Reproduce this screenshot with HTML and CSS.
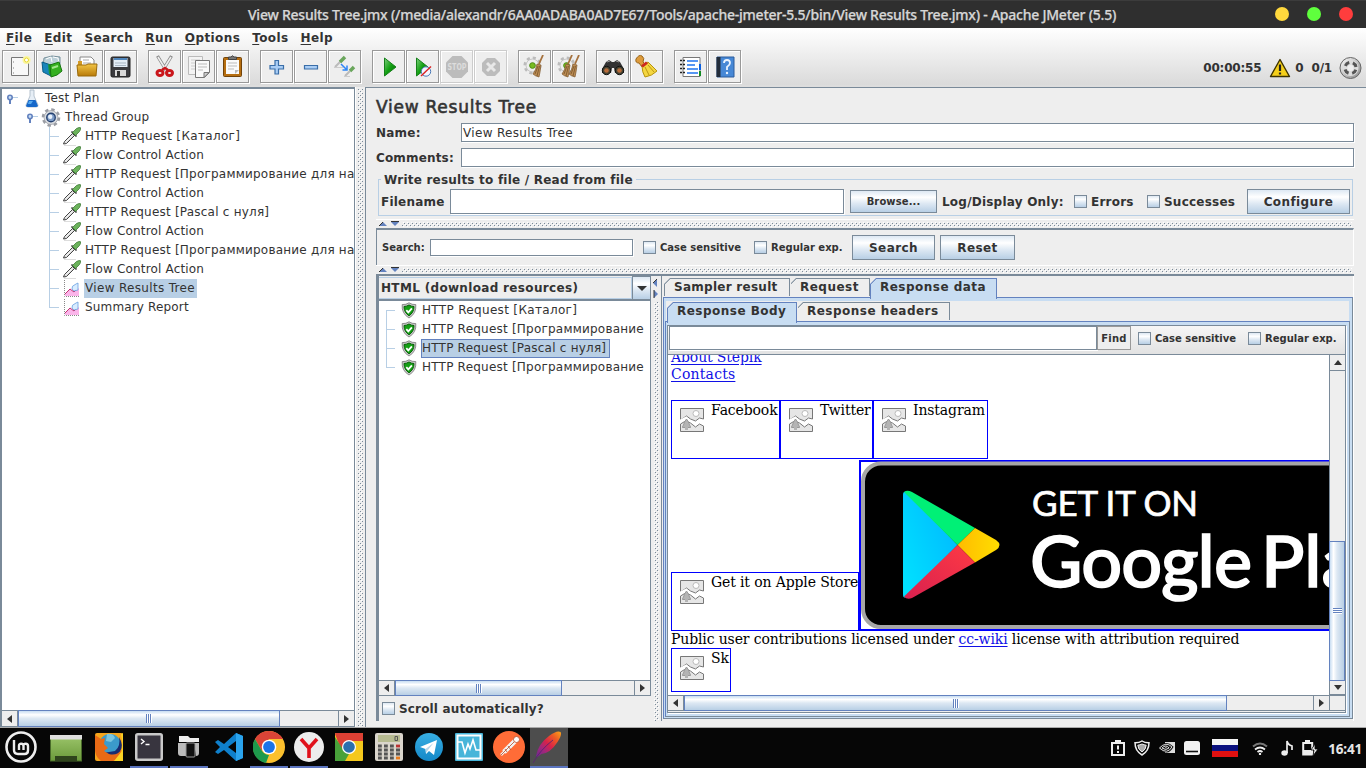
FILE: index.html
```html
<!DOCTYPE html>
<html lang="en">
<head>
<meta charset="utf-8">
<title>Apache JMeter</title>
<link rel="stylesheet" href="styles.css">
</head>
<body>
<svg class="defs" width="0" height="0">
  <defs>
    <pattern id="bump" width="4" height="4" patternUnits="userSpaceOnUse"><path fill="#7a8a99" d="M0 0h1v1H0zM2 2h1v1H2z"/><path fill="#fff" d="M1 1h1v1H1zM3 3h1v1H3z"/></pattern>
    <linearGradient id="gGreen" x2="1" y2="1"><stop stop-color="#7fd07f"/><stop offset=".5" stop-color="#12a012"/><stop offset="1" stop-color="#046204"/></linearGradient>
    <linearGradient id="gGold" x2="0" y2="1"><stop stop-color="#f3c545"/><stop offset="1" stop-color="#b87a08"/></linearGradient>
    <linearGradient id="gMetal" x2="1" y2="1"><stop stop-color="#fff"/><stop offset="1" stop-color="#888"/></linearGradient>
    <linearGradient id="gBlue" x2="0" y2="1"><stop stop-color="#37aee2"/><stop offset="1" stop-color="#1488c8"/></linearGradient>
    <linearGradient id="gFeather" x1="0" y1="1" x2="1" y2="0"><stop stop-color="#6a2b8f"/><stop offset=".3" stop-color="#a5267a"/><stop offset=".5" stop-color="#d6224a"/><stop offset=".75" stop-color="#ee5a24"/><stop offset="1" stop-color="#f9a51a"/></linearGradient>
    <linearGradient id="gDesk" x2="0" y2="1"><stop stop-color="#9bc46a"/><stop offset="1" stop-color="#6b9a3a"/></linearGradient>
    <linearGradient id="pBlue" x1="1" y1="0" x2="0" y2=".8"><stop stop-color="#00b4ff"/><stop offset="1" stop-color="#00e0ff"/></linearGradient>
    <linearGradient id="pRed" x1="1" y1="0" x2="0" y2="1"><stop stop-color="#ff3a44"/><stop offset="1" stop-color="#d8204f"/></linearGradient>
    <linearGradient id="pYel" x2="1"><stop stop-color="#ffbb00"/><stop offset="1" stop-color="#ffde00"/></linearGradient>
    <symbol id="dropper" viewBox="0 0 19 19"><path d="M2 18.500h12" stroke="#ddd"/><path d="M1.500 17l1-2.500 8-8 2 2-8 8z" fill="#ddd" stroke="#444" stroke-width="1"/><path d="M4 14.500l6-6" stroke="#fff"/><path d="M9.500 4.500l5 5" stroke="#333" stroke-width="1.600"/><path d="M10.500 5.500l4-4q3-1.500 4-.8.5 1.500-1 3.800l-4 4z" fill="#6cb35c" stroke="#3d7a35" stroke-width=".8"/></symbol>
    <symbol id="chart" viewBox="0 0 19 19"><path d="M2.500 1v16.500H18" stroke="#888" stroke-dasharray="1 1" fill="none"/><path d="M3 15l5-5 4 3 5-4v8H3z" fill="#fbb5ea"/><path d="M3 15l5-5 4 3 4-4" fill="none" stroke="#c03070"/><path d="M10 10q-1-3 4-5l2-1v7l-4 1z" fill="#d8ecff" stroke="#6a9fe0" stroke-width=".8"/></symbol>
    <symbol id="flask" viewBox="0 0 16 19"><path d="M6 1h4v6l4 9q.5 2-2 2H4q-2.500 0-2-2l4-9z" fill="#e6eef6" stroke="#a5b4c3" stroke-width=".8"/><path d="M4.500 11h7l2.300 5.500q0 1.500-2 1.500H4q-2 0-1.800-1.500z" fill="#1567c9"/><path d="M5 12h4l-2 3H4z" fill="#55a9ef"/></symbol>
    <symbol id="gear" viewBox="0 0 20 20"><circle cx="10" cy="10" r="8" fill="none" stroke="#9a9da4" stroke-width="3.600" stroke-dasharray="3.400 2.880"/><circle cx="10" cy="10" r="7.300" fill="#d9dce0" stroke="#9a9da4" stroke-width=".8"/><circle cx="10" cy="10" r="4.500" fill="#7d9bc6" stroke="#24406f" stroke-width="1.400"/><circle cx="9.200" cy="9.200" r="2.300" fill="#e9f1fb"/></symbol>
    <symbol id="handle" viewBox="0 0 12 12"><path d="M4 4.500h8" stroke="#b8cfe5"/><path d="M4 5v6" stroke="#6382bf" stroke-width="2"/><circle cx="4" cy="4.500" r="2.200" fill="#c8ddf2" stroke="#6382bf" stroke-width="1.600"/></symbol>
    <symbol id="shield" viewBox="0 0 16 17"><path d="M8 .8q3 2 6.800 1.800.8 9-6.800 13.400Q.4 11.600 1.200 2.600 5 2.800 8 .8z" fill="#c9c9c9" stroke="#777" stroke-width=".8"/><path d="M8 3q2.500 1.500 5 1.500 0 6-5 9.300-5-3.300-5-9.300Q5.500 4.500 8 3z" fill="#14a014" stroke="#066006"/><path d="M5.300 8.200l2 2.200 3.600-4" fill="none" stroke="#fff" stroke-width="1.800"/></symbol>
    <symbol id="broken" viewBox="0 0 26 27"><path d="M1.500 11V2.500h23V13l-4-1-4 3-5-2-4-3-6 4z" fill="#e6e6e6" stroke="#777"/><path d="M1.500 25.500V18l5-3 5 2 5 4 4-3 4 2v5.500z" fill="#e6e6e6" stroke="#777"/><path d="M1 14.500l6-3 5 4 5 3 4-3 4 1" stroke="#fff" stroke-width="1.500" fill="none"/><circle cx="17" cy="7.500" r="3" fill="#fff" stroke="#bbb"/><path d="M7.500 13q2.500 3 3 6 1 1 1 2.500H3.500q0-1.500 1-2.500.5-3 3-6z" fill="#b4b4b4" stroke="#999"/><path d="M6 21h3v3H6z" fill="#b4b4b4"/></symbol>
    <symbol id="broom" viewBox="0 0 12 23"><path d="M11 0L7 9" stroke="#a5713d" stroke-width="1.800"/><path d="M5 9l4 1q-1 8-2 12-4-1-6-3 3-4 4-10z" fill="#bd8d54" stroke="#7b5529" stroke-width=".7"/><path d="M6 11L3 19M7.500 11L5 21" stroke="#6c4a24" stroke-width=".7"/></symbol>
    <symbol id="cog" viewBox="0 0 20 20"><circle cx="10" cy="10" r="7.500" fill="none" stroke="#bbb" stroke-width="4" stroke-dasharray="3 2.890"/><circle cx="10" cy="10" r="6.800" fill="#eee" stroke="#c4c4c4"/><circle cx="10" cy="10" r="3" fill="#78bb22" stroke="#4a8a12"/></symbol>
  </defs>
</svg>

<header class="titlebar">
  <h1>View Results Tree.jmx (/media/alexandr/6AA0ADABA0AD7E67/Tools/apache-jmeter-5.5/bin/View Results Tree.jmx) - Apache JMeter (5.5)</h1>
  <div class="winbtns"><i class="wy"></i><i class="wg"></i><i class="wr"></i></div>
</header>

<div class="chrome">
  <nav class="menubar"><span><u>F</u>ile</span><span><u>E</u>dit</span><span><u>S</u>earch</span><span><u>R</u>un</span><span><u>O</u>ptions</span><span><u>T</u>ools</span><span><u>H</u>elp</span></nav>
  <div class="toolbar">
    <div class="tgroup">
      <button><svg viewBox="0 0 33 33"><path d="M9.500 7.500h17v18h-17z" fill="#f8f8f8" stroke="#777"/><path d="M11.500 11v2M11.500 17v2M11.500 22v2" stroke="#bbb"/><circle cx="24.500" cy="10" r="4" fill="#fbf6a0"/><circle cx="24.500" cy="10" r="2" fill="#fff" stroke="#e7d82e"/></svg></button>
      <button><svg viewBox="0 0 33 33"><path d="M8 8l8-2 8 1v9H7z" fill="#bcd0d8" stroke="#77909b"/><path d="M10 9l5-2 1 5M17 7l5 1 1 6" stroke="#fff" fill="none"/><path d="M6 12l9 3v11l-8-4z" fill="#1785ba" stroke="#0a5d88"/><path d="M12 14l7 2v10l-6-2z" fill="#199a35"/><path d="M14 15l9-3 3 9-5 4-6 2z" fill="#35b020" stroke="#19780e"/><path d="M16 18l6-2" stroke="#a3e88d" stroke-width="2"/></svg></button>
      <button><svg viewBox="0 0 33 33"><path d="M10 7h11l3 3v8H10z" fill="#fff" stroke="#888"/><path d="M13 10h6M13 13h8" stroke="#aaa"/><path d="M8 11h4v5H8z" fill="#d39a24"/><path d="M7 15h9l2-1h9l-1 12H8z" fill="url(#gGold)" stroke="#9a6a0b"/></svg></button>
      <button><svg viewBox="0 0 33 33"><rect x="7" y="7" width="19" height="20" rx="1.500" fill="#3b3b3f" stroke="#222"/><path d="M9.500 8h14v9h-14z" fill="#e4edf6"/><path d="M10 8h13v2H10z" fill="#5187bd"/><path d="M11 13h11M11 15.500h11" stroke="#a9b6c3"/><path d="M11 20h11v6H11z" fill="#d9d9d9"/><path d="M13 21h3v5h-3z" fill="#333"/></svg></button>
    </div>
    <div class="tgroup">
      <button><svg viewBox="0 0 33 33"><path d="M9.500 6l8.500 14M23.500 6L15 20" stroke="#888" stroke-width="3.200"/><path d="M10 7l8 13M23 7l-8 13" stroke="#eee" stroke-width="1.600"/><g fill="none" stroke="#c9161b" stroke-width="3"><ellipse cx="12" cy="23" rx="3" ry="2.500"/><ellipse cx="21.500" cy="23" rx="3" ry="2.500"/></g><path d="M14 20l3-2 3 2" stroke="#c9161b" stroke-width="2.500" fill="none"/></svg></button>
      <button><svg viewBox="0 0 33 33"><path d="M6.500 6.500h14v18h-14z" fill="#f4f4f4" stroke="#bbb"/><path d="M9 10h9M9 13h9M9 16h5M9 19h5" stroke="#ccc"/><path d="M13.500 10.500h14v12l-5 5h-9z" fill="#fafafa" stroke="#777"/><path d="M16 14h9M16 17h9M16 20h5" stroke="#bbb"/><path d="M27 22.500l-5 5v-5z" fill="#ccc" stroke="#777"/></svg></button>
      <button><svg viewBox="0 0 33 33"><rect x="7.500" y="7.500" width="18" height="19" rx="1" fill="#b66e10" stroke="#71430a"/><path d="M10 10h13v14H10z" fill="#fafafa"/><path d="M12 13h9M12 16h9M12 19h6" stroke="#bbb"/><path d="M12.500 9.500V7h2.500q1.500-2.500 3 0h2.500v2.500z" fill="#777" stroke="#444"/><path d="M23 20l-4 4v-4z" fill="#bbb"/></svg></button>
    </div>
    <div class="tgroup">
      <button><svg viewBox="0 0 33 33"><path d="M15 10.500h3.500v5h5v3.500h-5v5H15v-5h-5v-3.500h5z" fill="#a9cdf5" stroke="#3a6ea8" stroke-width="1.200"/></svg></button>
      <button><svg viewBox="0 0 33 33"><path d="M10.500 15.500h13v3.500h-13z" fill="#a9cdf5" stroke="#3a6ea8" stroke-width="1.200"/></svg></button>
      <button><svg viewBox="0 0 33 33"><path d="M7 17l6-6M17 26l5-5" stroke="#bbb" stroke-width="2"/><path d="M12 12l5-5M22 21l4-4" stroke="#6aa65c" stroke-width="3.500"/><path d="M6 17.500h9M16 26.500h6" stroke="#ccc"/><path d="M13 14l6 6m0-4.500V20h-4.500" stroke="#2f86f6" stroke-width="1.500" fill="none"/></svg></button>
    </div>
    <div class="tgroup">
      <button><svg viewBox="0 0 33 33"><path d="M12.500 8l11.500 9-11.500 9z" fill="url(#gGreen)" stroke="#16801a"/></svg></button>
      <button><svg viewBox="0 0 33 33"><path d="M10.500 8L22 17l-11.500 9z" fill="url(#gGreen)" stroke="#16801a"/><circle cx="20" cy="21.500" r="4.700" fill="#f4f6ff" stroke="#4a78b5"/><path d="M15 26L25 16.500" stroke="#d92020" stroke-width="1.400"/></svg></button>
      <button class="off"><svg viewBox="0 0 33 33"><path d="M12.500 6h9l6.500 6.500v9L21.500 28h-9L6 21.500v-9z" fill="#bcbcbc"/><text x="17" y="20" class="stop" textLength="19" lengthAdjust="spacingAndGlyphs">STOP</text></svg></button>
      <button class="off"><svg viewBox="0 0 33 33"><path d="M13 8h8l5 5v8l-5 5h-8l-5-5v-8z" fill="#bcbcbc"/><path d="M13 13l8 8M21 13l-8 8" stroke="#e8e8e8" stroke-width="3"/></svg></button>
    </div>
    <div class="tgroup">
      <button><svg viewBox="0 0 33 33"><use href="#cog" x="5" y="6" width="19" height="19"/><use href="#broom" x="14" y="5" width="12" height="23"/></svg></button>
      <button><svg viewBox="0 0 33 33"><use href="#cog" x="5" y="6" width="19" height="19"/><use href="#broom" x="9" y="5" width="12" height="23"/><use href="#broom" x="16" y="5" width="12" height="23"/></svg></button>
    </div>
    <div class="tgroup">
      <button><svg viewBox="0 0 33 33"><path d="M10 12l3-2 3 2h2l3-2 3 2 4 7v4h-9l-1-5h-2l-1 5H6v-4z" fill="#333"/><circle cx="10.500" cy="20.500" r="4.200" fill="#443" stroke="#111"/><circle cx="23.500" cy="20.500" r="4.200" fill="#443" stroke="#111"/><circle cx="10.500" cy="20.500" r="2.300" fill="#b86b3a"/><circle cx="23.500" cy="20.500" r="2.300" fill="#b86b3a"/><path d="M11 12l3-1M20 11l3 1" stroke="#999"/></svg></button>
      <button><svg viewBox="0 0 33 33"><path d="M6 9q3-5 6-3 3 2 1 6l2 2-3 3-3-4q-4 0-3-4z" fill="#dd9b3c" stroke="#9a6518"/><path d="M12 16l6-4 9 9q-5 5-12 6-3-5-3-11z" fill="#f4d640" stroke="#b6930f"/><path d="M11 15.500l5-4 2 2-5 4z" fill="#cc2a20"/><path d="M15 17l4 8M18 15l6 7" stroke="#bb9715"/></svg></button>
    </div>
    <div class="tgroup">
      <button><svg viewBox="0 0 33 33"><path d="M9 7.500h17v19H9z" fill="#fff" stroke="#777"/><path d="M6 10.500h5M6 14.500h5M6 18.500h5M6 22.500h5" stroke="#222" stroke-width="1.600" stroke-dasharray="2 1"/><path d="M13 11h11M13 15h8M13 19h11M13 23h11" stroke="#2074f0" stroke-width="1.600"/><path d="M26 14v6" stroke="#0a60e0" stroke-width="2"/><path d="M26 21v5" stroke="#118a22" stroke-width="2"/></svg></button>
      <button><svg viewBox="0 0 33 33"><path d="M9 7h17v20H9z" fill="#4788d6" stroke="#2c5c9c"/><path d="M8.500 7h4v20h-4z" fill="#222c3a"/><path d="M16 13q0-3 3-3t3 3q0 2-3 4v3" fill="none" stroke="#eaf3ff" stroke-width="1.800"/><circle cx="19" cy="23" r="1.200" fill="#eaf3ff"/></svg></button>
    </div>
    <div class="status">
      <span>00:00:55</span>
      <svg width="22" height="20" viewBox="0 0 22 20"><path d="M11 1.500l9.500 17h-19z" fill="#f5cf1a" stroke="#3c3200" stroke-width="1.400" stroke-linejoin="round"/><path d="M11 6.500v6.500M11 14.500v2" stroke="#222" stroke-width="2.200"/></svg>
      <span class="err">0</span><span>0/1</span>
      <svg width="23" height="24" viewBox="0 0 23 24"><circle cx="11.500" cy="12" r="10.500" fill="url(#gMetal)" stroke="#666"/><circle cx="11.500" cy="12" r="8" fill="#ddd"/><circle cx="11.500" cy="12" r="5.600" fill="none" stroke="#555" stroke-width="3" stroke-dasharray="5 3.800" stroke-dashoffset="7"/><circle cx="11.500" cy="12" r="3" fill="#eee"/></svg>
    </div>
  </div>
</div>

<main class="main">
  <section class="plan">
    <div class="plantree">
      <div class="row r0"><svg class="hd" width="12" height="12"><use href="#handle"/></svg><svg width="16" height="19"><use href="#flask"/></svg><span class="t1">Test Plan</span></div>
      <div class="row r1"><svg class="hd" width="12" height="12"><use href="#handle"/></svg><svg width="20" height="19"><use href="#gear"/></svg><span class="t1">Thread Group</span></div>
      <div class="kids">
        <div class="row"><svg><use href="#dropper"/></svg><span class="t3">HTTP Request [Каталог]</span></div>
        <div class="row"><svg><use href="#dropper"/></svg><span class="t1">Flow Control Action</span></div>
        <div class="row"><svg><use href="#dropper"/></svg><span class="t2">HTTP Request [Программирование для на</span></div>
        <div class="row"><svg><use href="#dropper"/></svg><span class="t1">Flow Control Action</span></div>
        <div class="row"><svg><use href="#dropper"/></svg><span class="t2">HTTP Request [Pascal с нуля]</span></div>
        <div class="row"><svg><use href="#dropper"/></svg><span class="t1">Flow Control Action</span></div>
        <div class="row"><svg><use href="#dropper"/></svg><span class="t2">HTTP Request [Программирование для на</span></div>
        <div class="row"><svg><use href="#dropper"/></svg><span class="t1">Flow Control Action</span></div>
        <div class="row"><svg><use href="#chart"/></svg><span class="t3 sel">View Results Tree</span></div>
        <div class="row"><svg><use href="#chart"/></svg><span class="t1">Summary Report</span></div>
      </div>
    </div>
    <div class="hscroll"><b class="ar left"></b><div class="thumb w262"><i></i></div><div class="track"></div><b class="ar right"></b></div>
  </section>
  <svg class="vdiv"><rect x="2" y="2" width="5" height="100%" fill="url(#bump)"/></svg>

  <section class="editor">
    <h2>View Results Tree</h2>
    <div class="field"><label class="t2">Name:</label><div class="inp t3">View Results Tree</div></div>
    <div class="field second"><label class="t1">Comments:</label><div class="inp"></div></div>
    <fieldset>
      <legend class="t2">Write results to file / Read from file</legend>
      <label class="t2">Filename</label><div class="inp fname"></div><button class="btn small browse">Browse...</button>
      <label class="t2 log">Log/Display Only:</label><i class="chk"></i><label class="t2 errl">Errors</label><i class="chk"></i><label class="t2 succ">Successes</label><button class="btn conf">Configure</button>
    </fieldset>
    <svg class="hdiv"><path d="M0 .5h978" stroke="#fff"/><path d="M3 7l4-4 4 4z" fill="#6382bf"/><path d="M3 7l4-4" stroke="#333"/><path d="M15 2.500h8" stroke="#333"/><path d="M15 3h8l-4 4z" fill="#6382bf"/><rect x="26" y="3" width="950" height="5" fill="url(#bump)"/></svg>
    <div class="searchbox">
      <label class="small">Search:</label><div class="inp"></div><i class="chk"></i><label class="small cs">Case sensitive</label><i class="chk"></i><label class="small re">Regular exp.</label><button class="btn sb">Search</button><button class="btn rb">Reset</button>
    </div>
    <svg class="hdiv"><path d="M0 .5h978" stroke="#fff"/><path d="M3 7l4-4 4 4z" fill="#6382bf"/><path d="M3 7l4-4" stroke="#333"/><path d="M15 2.500h8" stroke="#333"/><path d="M15 3h8l-4 4z" fill="#6382bf"/><rect x="26" y="3" width="950" height="5" fill="url(#bump)"/></svg>
    <div class="results">
      <div class="samples">
        <div class="combo"><span class="t3">HTML (download resources)</span><b></b></div>
        <div class="slist">
          <div class="row"><svg><use href="#shield"/></svg><span class="t3">HTTP Request [Каталог]</span></div>
          <div class="row"><svg><use href="#shield"/></svg><span class="t2">HTTP Request [Программирование</span></div>
          <div class="row"><svg><use href="#shield"/></svg><span class="t2 sel">HTTP Request [Pascal с нуля]</span></div>
          <div class="row"><svg><use href="#shield"/></svg><span class="t2">HTTP Request [Программирование</span></div>
        </div>
        <div class="hscroll"><b class="ar left"></b><div class="thumb w167"><i></i></div><div class="track"></div><b class="ar right"></b></div>
        <div class="auto"><i class="chk"></i><label class="t1">Scroll automatically?</label></div>
      </div>
      <svg class="vdiv2"><path d="M6 3L2 7l4 4z" fill="#6382bf"/><path d="M6 3L2 7" stroke="#333"/><path d="M3 14l4 4-4 4z" fill="#6382bf"/><path d="M3 14v8" stroke="#333"/><rect x="3" y="26" width="5" height="420" fill="url(#bump)"/></svg>
      <div class="detail">
        <div class="tabs outer"><span class="tab w126">Sampler result</span><span class="tab w80">Request</span><span class="tab on w127">Response data</span></div>
        <div class="panel p1">
          <div class="tabs"><span class="tab on w130">Response Body</span><span class="tab w153">Response headers</span></div>
          <div class="panel p2">
            <div class="body">
              <div class="find"><div class="inp"></div><button>Find</button><i class="chk"></i><label class="small cs">Case sensitive</label><i class="chk"></i><label class="small">Regular exp.</label></div>
              <div class="view">
                <div class="page">
                  <a class="l1">About Stepik</a>
                  <a class="l2">Contacts</a>
                  <div class="imgs"><div class="ph w109"><svg><use href="#broken"/></svg>Facebook</div><div class="ph w93"><svg><use href="#broken"/></svg>Twitter</div><div class="ph w115"><svg><use href="#broken"/></svg>Instagram</div></div>
                  <div class="stores">
                    <div class="ph apple"><svg><use href="#broken"/></svg>Get it on Apple Store</div>
                    <svg class="badge" width="560" height="171" viewBox="859 460 560 171">
                      <rect x="860" y="461" width="580" height="169" fill="#fff" stroke="#00f" stroke-width="2"/>
                      <rect x="863" y="463.500" width="600" height="163.500" rx="18" fill="#000" stroke="#a6a6a6" stroke-width="4"/>
                      <path d="M903 495v99q0 5 3 3L957.500 545 906 492q-3-1-3 3z" fill="url(#pBlue)"/>
                      <path d="M904 492q3-2.500 8 0L975 528 957.500 545z" fill="#00f076"/>
                      <path d="M975 528l21 12q7 5 0 10l-21 12.500L957.500 545z" fill="url(#pYel)"/>
                      <path d="M957.500 545L975 562.500 912 598q-5 2-8-1.500z" fill="url(#pRed)"/>
                      <text x="1032" y="516" class="geton" textLength="166">GET IT ON</text>
                      <text x="1030" y="587" class="gplay" textLength="222">Google</text>
                      <text x="1261" y="587" class="gplay">Play</text>
                    </svg>
                  </div>
                  <p>Public user contributions licensed under <a>cc-wiki</a> license with attribution required</p>
                  <div class="ph sk"><svg><use href="#broken"/></svg>Sk</div>
                </div>
                <div class="vscroll"><b class="ar up"></b><div class="vtrack"></div><div class="vthumb"><i></i></div><b class="ar down"></b></div>
              </div>
              <div class="hscroll last"><b class="ar left"></b><div class="thumb w544"><i></i></div><div class="track"></div><b class="ar right"></b><div class="corner"></div></div>
            </div>
          </div>
        </div>
      </div>
    </div>
  </section>
</main>

<footer class="taskbar">
  <div class="task mint"><svg viewBox="0 0 32 32"><circle cx="16" cy="16" r="14.500" fill="none" stroke="#eee" stroke-width="2.600"/><path d="M9 9v10q0 4 4 4h6.500q3.500 0 3.500-3.500V15q0-2.300-2.300-2.300T18.500 15v4M18.500 15q0-2.300-2.300-2.300T14 15v4" fill="none" stroke="#eee" stroke-width="2.400"/></svg></div>
  <div class="task desk"><svg viewBox="0 0 32 32"><rect x=".5" y="5" width="31" height="25" fill="url(#gDesk)" stroke="#496b2a"/><path d="M0 4h32v4.500H0z" fill="#dedede"/><path d="M5 25h22v5H5z" fill="#2f441c"/></svg></div>
  <div class="task"><svg viewBox="0 0 32 32"><rect x="2" y="2" width="28" height="28" rx="2" fill="#f6a51c"/><circle cx="17" cy="14" r="11" fill="#3b9bcb"/><path d="M14 3q6-1 8 4l-4 4-5-1z" fill="#7ac5df"/><path d="M26 6q5 8 1 15-8 8-17 1l12-2q6-5 4-14z" fill="#182b70"/><path d="M2 4l6 4 4-1-1 6 4 4-4 3 5 3q8 2 12-4 0 9-8 11H8Q1 25 2 15z" fill="#e86a15"/><path d="M28 3q2 8 1 17l-8 10h9V2z" fill="#fbd324"/></svg></div>
  <div class="task run"><svg viewBox="0 0 32 32"><rect x="3.250" y="3.250" width="25.500" height="25.500" rx="1.500" fill="#38353f" stroke="#c9c9c9" stroke-width="2.500"/><path d="M8 8l3 2.500L8 13M12.500 13.500h4" stroke="#fff" fill="none" stroke-width="1.400"/></svg></div>
  <div class="task run"><svg viewBox="0 0 32 32"><path d="M6 5h9l2 2h9v4H6z" fill="#eee"/><path d="M5 12h9v13H8q-3 0-3-3zM21 12h5v10q0 3-3 3z" fill="#bbb"/><rect x="13" y="12" width="9" height="14" rx="1" fill="#111" stroke="#999"/></svg></div>
  <div class="task"><svg viewBox="0 0 32 32"><path d="M23 2l7 3v22l-7 3-12-11-6 4-3-2 5-5-5-5 3-2 6 4zM23 10l-8 6 8 6z" fill="#0f80cc" fill-rule="evenodd"/><path d="M23 2l7 3v22l-7 3z" fill="#2aa4ee"/></svg></div>
  <div class="task run"><svg viewBox="0 0 32 32"><circle cx="16" cy="16" r="16" fill="#fbc02d"/><path d="M2 8A16 16 0 0116 0q9 0 14 8H16l-7 12z" fill="#db4437"/><path d="M2 8l7 12q3 4 7 4l-3 8A16 16 0 012 8z" fill="#1e9a4c"/><circle cx="16" cy="16" r="7.300" fill="#fff"/><circle cx="16" cy="16" r="5.900" fill="#1a73e8"/></svg></div>
  <div class="task run"><svg viewBox="0 0 32 32"><circle cx="16" cy="16" r="15" fill="#ececec"/><path d="M8 8l8 9 8-9M16 16v11" fill="none" stroke="#e0111b" stroke-width="3.600"/></svg></div>
  <div class="task"><svg viewBox="0 0 32 32"><rect x="2" y="2" width="28" height="28" rx="1" fill="#f4c81c"/><path d="M2 3q0-1 1-1h26q1 0 1 1v7H16l-8 8z" fill="#dc4034"/><path d="M2 6l9 14 5 3-4 7H2z" fill="#48a13a"/><circle cx="16" cy="16" r="7" fill="#fff"/><circle cx="16" cy="16" r="5.800" fill="#2b6fae"/></svg></div>
  <div class="task"><svg viewBox="0 0 32 32"><rect x="2" y="2" width="28" height="28" rx="2" fill="#dad5cc"/><rect x="5" y="4" width="22" height="7" fill="#b7bb91"/><path d="M22 5.500h2.500v4H22z" fill="none" stroke="#555"/><path d="M5 15h18M5 19h18M5 23h18M5 27h18" stroke="#555" stroke-width="2.800" stroke-dasharray="3.800 2.200"/><path d="M23 15h4" stroke="#b33" stroke-width="2.800"/><path d="M23 27h4" stroke="#e77a1c" stroke-width="2.800"/><path d="M23 19h4M23 23h4" stroke="#555" stroke-width="2.800"/></svg></div>
  <div class="task"><svg viewBox="0 0 32 32"><circle cx="16" cy="16" r="14" fill="url(#gBlue)"/><path d="M7 16l17-7-3 15-5-4-3 3-.5-5z" fill="#fff"/><path d="M12.500 18l8-6-5.500 7-2 3z" fill="#b6d5e8"/></svg></div>
  <div class="task"><svg viewBox="0 0 32 32"><rect x="2" y="2" width="28" height="28" rx="1" fill="#47b5d9"/><rect x="4.500" y="4.500" width="23" height="23" fill="none" stroke="#fff" stroke-width="2"/><path d="M5 11h4l3 11 3-9 2 5 3-9 3 10h4" fill="none" stroke="#fff" stroke-width="1.600"/></svg></div>
  <div class="task"><svg viewBox="0 0 32 32"><circle cx="16" cy="16" r="16" fill="#ff6c37"/><path d="M8 24l4-4" stroke="#f3f3f3" stroke-width="2.500"/><path d="M11 21L22 10" stroke="#f3f3f3" stroke-width="5"/><path d="M8 24L22 10M14 21l-2-3M18 19l-3-4" stroke="#b44c28" fill="none" stroke-width=".8"/><circle cx="23.500" cy="8.500" r="3" fill="#fff" stroke="#b44c28" stroke-width=".8"/></svg></div>
  <div class="task run cur"><svg viewBox="0 0 32 32"><path d="M3 25Q5 13 16 5q8-6 11.500-4 2 2-3 10-7 11-16 12l-4 3z" fill="url(#gFeather)"/><path d="M0 32Q7 19 20 9" stroke="#5a2270" fill="none" stroke-width=".9"/></svg></div>
  <div class="tray">
    <svg width="14" height="16" viewBox="0 0 14 16"><path d="M1 3h12v12H1z" fill="none" stroke="#eee" stroke-width="2"/><path d="M4 0h6v4H4z" fill="#eee"/><path d="M7 5.500v4M7 11v2" stroke="#eee" stroke-width="2"/></svg>
    <svg width="16" height="16" viewBox="0 0 16 16"><path d="M8 1q3 2 7 1.800Q15 11 8 15 1 11 1 2.800 5 3 8 1z" fill="none" stroke="#eee" stroke-width="1.500"/><path d="M8 4q2 1 4.200 1.200Q12 9.500 8 12 4 9.500 3.800 5.200 6 5 8 4z" fill="#aaa" stroke="#eee"/></svg>
    <svg width="16" height="12" viewBox="0 0 16 12"><path d="M6 0h10v11H6z" fill="#ddd"/><path d="M.5 6Q7-1 13 5q-5 8-12.500 1zM3 6q4-4 7 0-3 3-7 0z" fill="none" stroke="#111" stroke-width="2.400"/><path d="M.5 6Q7-1 13 5q-5 8-12.500 1zM3 6q4-4 7 0-3 3-7 0z" fill="none" stroke="#ddd"/></svg>
    <svg width="16" height="14" viewBox="0 0 16 14"><rect width="16" height="14" rx="2.500" fill="#f2f2f2"/><path d="M2 10.500h12" stroke="#111" stroke-width="1.600"/></svg>
    <svg class="flag" width="26" height="18" viewBox="0 0 26 18"><path d="M0 0h26v6H0z" fill="#f6f6f6"/><path d="M0 6h26v6H0z" fill="#0c1280"/><path d="M0 12h26v6H0z" fill="#e01010"/></svg>
    <svg class="wifi" width="16" height="13" viewBox="0 0 16 13"><path d="M1 4.500q7-6 14 0" fill="none" stroke="#777" stroke-width="2"/><path d="M3 7.500q5-4 10 0M5.500 10q2.500-2 5 0" fill="none" stroke="#eee" stroke-width="1.800"/><circle cx="8" cy="12" r="1.200" fill="#eee"/></svg>
    <svg width="12" height="16" viewBox="0 0 12 16"><ellipse cx="3.500" cy="13" rx="3.200" ry="2.700" fill="#eee"/><path d="M6 13V1q1 4 5 5v4" fill="none" stroke="#eee" stroke-width="1.700"/></svg>
    <svg width="17" height="16" viewBox="0 0 17 16"><path d="M1.200 3h9v11.500h-9z" fill="none" stroke="#eee" stroke-width="2"/><path d="M3 0h5v3H3zM1 10h9v5H1z" fill="#eee"/><path d="M13 4l-4 6h3l-1 6 5-7h-3z" fill="#eee" stroke="#060606" stroke-width=".8"/></svg>
    <time>16:41</time>
  </div>
</footer>
</body>
</html>
```
FILE: styles.css
```css
*{box-sizing:border-box}
body{margin:0;width:1366px;height:768px;overflow:hidden;display:flex;flex-direction:column;font:12px "DejaVu Sans",sans-serif;color:#333;background:#eee;white-space:nowrap}
.defs{display:block;position:absolute}
svg{display:block;flex:none}
h1,h2,p{margin:0}
button{font:inherit;color:inherit;padding:0;margin:0}
.t1{letter-spacing:.16px}.t2{letter-spacing:.22px}.t3{letter-spacing:.33px}

.titlebar{height:28px;background:#2f2f2f;border-top:1px solid #3c3c3c;position:relative;display:flex;align-items:center;justify-content:center;flex:none}
.titlebar h1{font:500 14px "Noto Sans",sans-serif;letter-spacing:-.237px;color:#d6d6d6;-webkit-text-stroke:.25px #d6d6d6;width:870px;padding-bottom:1px}
.winbtns{position:absolute;right:13px;top:6px;display:flex;gap:18px}
.winbtns i{width:14px;height:14px;border-radius:50%}
.wy{background:#ffd83d}.wg{background:#5fff3d}.wr{background:#ff3d3d}

.chrome{height:59px;flex:none;background:linear-gradient(#fff,#dadada);border-bottom:2px solid #ddd}
.menubar{height:21px;display:flex;gap:12px;padding:3px 0 0 6px;font-weight:bold;letter-spacing:.4px;line-height:15px}
.menubar u{text-underline-offset:2px;text-decoration-thickness:1px}
.toolbar{display:flex;height:36px;padding:1px 0 0 2px;gap:11px;align-items:flex-start}
.tgroup{display:flex;gap:1px}
.tgroup button{width:33px;height:33px;border:1px solid #999;background:#eee;box-shadow:inset 1px 1px #fff,1px 1px #fff}
.tgroup button svg{width:33px;height:33px;margin:-1px}
.tgroup .off{border-color:#ccc}
.stop{font:bold 8px "DejaVu Sans";fill:#ddd;text-anchor:middle}
.status{margin-left:auto;display:flex;align-items:center;height:35px;padding-right:4px;font-weight:bold;letter-spacing:-.2px}
.status svg:nth-of-type(1){margin:0 4px 0 8px}
.status .err{margin-right:8px}
.status svg:last-child{margin-left:7px}

.main{flex:1;display:flex;min-height:0;border-bottom:1px solid #aaa}
.plan{width:355px;border:solid #7a8a99;border-width:2px 1px 0 2px;background:#fff;display:flex;flex-direction:column}
.plantree{flex:1;min-height:0;overflow:hidden}
.row{display:flex;align-items:center;height:19px}
.row span{height:19px;line-height:19px;padding:0 2px 0 1px}
.sel{background:#b8cfe5}
.r0{padding-left:4px}.r0 .hd{margin-right:6px}.r0 span{margin-left:4px}
.r1{padding-left:24px}.r1 .hd{margin-right:3px}.r1 span{margin-left:3px}
.kids{margin-left:47px;border-left:1px solid #b8cfe5;height:181px}
.kids .row::before,.slist .row::before{content:"";width:9px;height:1px;background:#b8cfe5;flex:none}
.kids .row svg{width:19px;height:19px;margin:0 3px 0 3px}
.hscroll{display:flex;height:16px;border:solid #7a8a99;border-width:1px 0;background:#eee;flex:none}
.plan .hscroll{height:17px}
.ar{width:16px;display:flex;align-items:center;justify-content:center;background:#eee;flex:none}
.ar::before{content:"";border:4px solid transparent}
.left{border-right:1px solid #7a8a99}.right{border-left:1px solid #7a8a99}
.left::before{border-right-color:#333;border-right-width:5px;margin-left:-4px}.right::before{border-left-color:#333;border-left-width:5px;margin-right:-4px}
.up::before{border-bottom-color:#333;margin-top:-4px}.down::before{border-top-color:#333;margin-bottom:-4px}
.up::before{border-bottom-width:5px}.down::before{border-top-width:5px}
.thumb{border:1px solid #6382bf;margin:-1px 0;background:linear-gradient(#c8ddf2,#fff 25%,#dde8f3 50%,#b8cfe5);display:flex;align-items:center;justify-content:center}
.thumb i{width:6px;height:9px;background:repeating-linear-gradient(90deg,#6382bf 0 1px,#fff 1px 2px)}
.w262{width:262px}.w167{width:167px}.w544{width:543px}
.track{flex:1}
.vdiv{width:11px;height:100%;border-right:1px solid #7a8a99;border-left:1px solid #fff}

.editor{flex:1;min-width:0;padding:0 12px 0 10px;border-top:1px solid #7a8a99}
.editor label,.editor button,.editor legend{font-weight:bold}
h2{font:17px/20px "DejaVu Sans";letter-spacing:.76px;-webkit-text-stroke:.6px #333;padding-top:9px;height:35px}
.inp{border:1px solid #7a8a99;background:#fff;box-shadow:1px 1px #fff;height:19px}
.field{display:flex;align-items:center;height:19px}
.field label{width:85px}
.field .inp{flex:1;line-height:18px;padding-left:1px}
.second{margin-top:6px}
fieldset{position:relative;display:flex;align-items:center;margin:12px 1px 0 2px;padding:8px 0 0 2px;height:37px;border:1px solid #b8cfe5;min-width:0}
legend{position:absolute;left:2px;top:-8px;background:#eee;padding:0 3px;line-height:17px}
.fname{width:394px;height:25px;margin:0 6px}
fieldset>label:first-of-type{width:63px}
.btn{border:1px solid #7a8a99;background:linear-gradient(#dde8f3,#fff 30%,#dde8f3 60%,#b8cfe5);height:25px;letter-spacing:.4px;flex:none}
.small{font-size:10px;font-weight:bold;letter-spacing:0}
.browse{width:87px;height:23px;letter-spacing:.1px}
.log{margin-left:5px;width:132px}
.chk{width:13px;height:13px;border:1px solid #7a8a99;background:linear-gradient(#dde8f3,#fff 30%,#dde8f3 60%,#b8cfe5);flex:none}
.errl{margin-left:4px;width:56px}
.succ{margin-left:4px;width:83px}
.conf{width:103px}
.hdiv{width:978px;height:9px}
fieldset+.hdiv{margin-top:3px}
.searchbox{height:37px;border-top:2px solid #7a8a99;border-left:1px solid #7a8a99;border-right:1px solid #fff;display:flex;align-items:center;padding:0 0 0 5px}
.searchbox>label:first-child{width:48px}
.searchbox .inp{width:203px;height:17px;margin-right:10px}
.cs{margin-left:4px;width:93px;flex:none}
.searchbox .cs{width:94px}
.re{margin-left:4px;width:81px}
.sb{width:83px;margin-right:5px}.rb{width:75px}

.results{display:flex;height:447px;border-top:2px solid #7a8a99}
.samples{width:275px;border-left:3px solid #7a8a99;display:flex;flex-direction:column}
.combo{height:25px;display:flex;border-bottom:2px solid #7a8a99;background:#eee}
.combo span{flex:1;font-weight:bold;line-height:21px;padding-left:2px;border:1px solid #b8cfe5;border-width:1px 1px 1px 0;margin-top:1px}
.combo b{width:19px;border:1px solid #7a8a99;border-bottom:0;background:linear-gradient(#dde8f3,#fff 30%,#dde8f3 60%,#b8cfe5);display:flex;justify-content:center;align-items:center}
.combo b::before{content:"";border:5px solid transparent;border-top-color:#333;margin-bottom:-5px}
.slist{height:379px;background:#fff;border-right:1px solid #7a8a99;overflow:hidden;padding-left:7px;background-image:linear-gradient(#b8cfe5,#b8cfe5);background-size:1px 58px;background-repeat:no-repeat;background-position:7px 9px}
.slist .row svg{width:16px;height:17px;margin:0 4px 0 6px}
.slist .row span{padding-right:4px}
.slist .sel{outline:1px solid #6382bf;outline-offset:-1px}
.samples .hscroll{border-right:1px solid #7a8a99}
.auto{display:flex;align-items:center;padding:0 0 0 3px;height:25px;gap:4px}
.vdiv2{width:10px;height:445px}
.detail{flex:1;padding-left:1px;border-left:1px solid #7a8a99;border-right:1px solid #fff;min-width:0}
.tabs{display:flex;height:18px;padding-left:2px}
.tabs.outer{height:21px;padding-top:2px;padding-left:1px}
.tab{height:19px;background:#eee;border:1px solid #7a8a99;border-bottom:0;line-height:17px;padding-left:9px;font-weight:bold;letter-spacing:.48px;clip-path:polygon(6px 0,100% 0,100% 100%,0 100%,0 6px);background-image:linear-gradient(135deg,#7a8a99 3.5px,transparent 3.7px)}
.tab+.tab{border-left-color:transparent}
.tab.on{background:linear-gradient(135deg,#6382bf 3.5px,#c8ddf2 3.7px);border-color:#6382bf;height:21px;position:relative;z-index:1}
.tab:not(.on){height:18px}
.tab.w126{width:126px;letter-spacing:.27px}.w80{width:80px}.w127{width:127px}.w130{width:130px}.w153{width:153px}
.p1{height:422px;border:1px solid #6382bf;border-right-color:#7a8a99;border-bottom-color:#7a8a99;padding:4px 2px 2px 1px;background:linear-gradient(#c8ddf2,#c8ddf2) top/100% 3px no-repeat,linear-gradient(#c8ddf2,#c8ddf2) bottom/100% 3px no-repeat,linear-gradient(90deg,#c8ddf2 2px,#eee 2px 685px,#c8ddf2 685px)}
.p1>.tabs{height:19px;padding-left:2px}
.p2{height:396px;border:1px solid #6382bf;border-right-color:#7a8a99;border-bottom-color:#7a8a99;background:#c8ddf2;padding:3px 3px 3px 1px}
.body{height:388px;border:1px solid #7a8a99;box-shadow:1px 1px #fff;background:#eee;display:flex;flex-direction:column}
.find{height:29px;display:flex;align-items:center;padding:0 0 4px 1px;background:linear-gradient(#f6f6f6,#e2e2e2);border-bottom:1px solid #7a8a99}
.find .inp{width:428px;height:24px}
.find button{width:34px;height:24px;border:1px solid #999;background:#eee;font-size:10px;margin-right:7px;letter-spacing:.2px}
.find .cs{width:93px}
.find label:last-child{margin-left:4px}
.view{height:340px;display:flex;flex:none}
.page{flex:1;min-width:0;overflow:hidden;background:#fff;padding-left:3px;font:14px/17px "DejaVu Serif",serif;letter-spacing:-.13px;color:#000}
.page a{color:#1010e6;text-decoration:underline;text-underline-offset:2px;text-decoration-thickness:1px}
.page .l1,.page .l2{display:block}
.page .l1{margin-top:-6px;letter-spacing:-.12px}
.page .l2{letter-spacing:.2px}
.imgs{display:flex;margin-top:17px}
.ph{border:1px solid #00f;height:59px;display:flex;align-items:flex-start;padding-left:7px;line-height:19px}
.ph svg{width:26px;height:27px;margin:5px 6px 0 0}
.w109{width:109px}.w93{width:93px}.w115{width:115px}
.stores{display:flex;align-items:flex-end;height:171px;margin-top:1px}
.apple{width:188px;flex:none}
.sk{width:60px;height:44px}
.geton{font:35px Lato;fill:#fff;stroke:#fff;stroke-width:.7px;letter-spacing:0}
.gplay{font:500 72px Lato;fill:#fff;stroke:#fff;stroke-width:1.5px;letter-spacing:0}
.vscroll{width:16px;border-left:1px solid #7a8a99;display:flex;flex-direction:column;background:#eee;flex:none}
.vscroll .ar{width:auto;height:16px}
.up{border-bottom:1px solid #7a8a99}
.vscroll .down{border-bottom:1px solid #7a8a99;height:14px}
.vtrack{flex:1}
.vthumb{height:140px;margin-left:-1px;border:1px solid #6382bf;background:linear-gradient(90deg,#c8ddf2,#fff 25%,#dde8f3 50%,#b8cfe5);display:flex;align-items:center;justify-content:center}
.vthumb i{width:9px;height:6px;background:repeating-linear-gradient(#6382bf 0 1px,#fff 1px 2px)}
.corner{width:16px;border-left:1px solid #7a8a99}

.taskbar{height:40px;flex:none;background:#060606;display:flex;gap:2px;align-items:flex-start}
.task{width:38px;height:40px;padding:3px 3px 0;border-bottom:2px solid transparent}
.task svg{width:32px;height:32px}
.mint{margin-left:2px}
.desk{margin-left:5px;margin-right:3px}
.run{border-bottom-color:#5b74bf}
.cur{background:#4d4d4d}
.tray{margin-left:auto;display:flex;align-items:center;height:40px;padding-right:4px}
.tray svg{margin-right:9px}
.tray .flag{margin:0 14px 0 3px}
.tray .wifi{margin-right:13px}
.tray time{font:bold 13.500px "Noto Sans",sans-serif;color:#e6e6e6;letter-spacing:-.2px;padding-top:2px}
```
